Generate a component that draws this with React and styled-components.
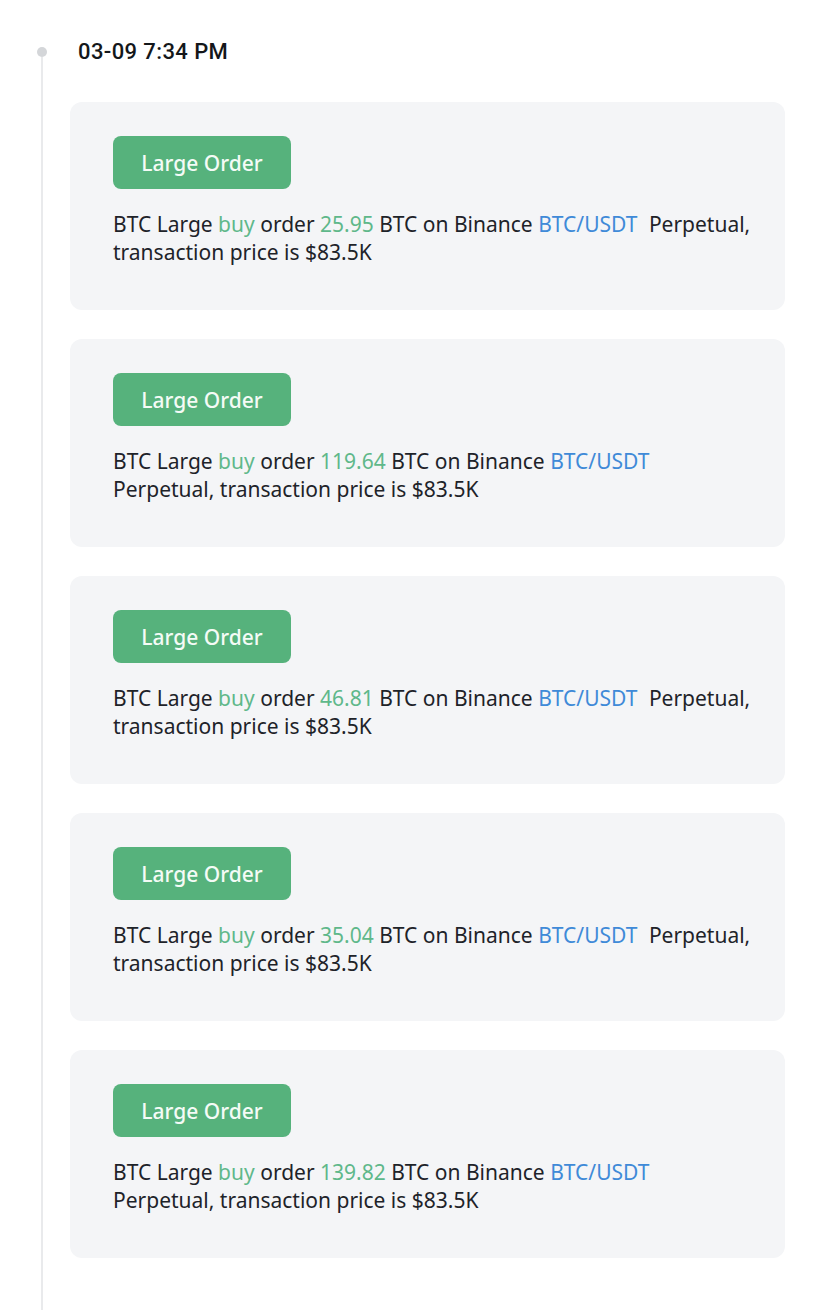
import React from "react";
import styled, { createGlobalStyle } from "styled-components";

const Global = createGlobalStyle`
  html, body { margin: 0; padding: 0; background: #ffffff; }
  body { font-family: "Noto Sans", "Open Sans", sans-serif; color: #1e2329; }
`;

const Page = styled.div`
  display: flex;
  min-height: 1310px;
  box-sizing: border-box;
  padding: 38px 0 0 37px;
`;

const Rail = styled.div`
  width: 10px;
  display: flex;
  flex-direction: column;
  align-items: center;
  padding-top: 9px;
`;

const Dot = styled.div`
  width: 10px;
  height: 10px;
  border-radius: 50%;
  background: #d4d6d9;
  flex: none;
`;

const Line = styled.div`
  width: 2px;
  flex: 1;
  background: #e9eaec;
`;

const Content = styled.div`
  margin-left: 23px;
  width: 715px;
  display: flex;
  flex-direction: column;
  padding-bottom: 51px;
`;

const Time = styled.div`
  height: 28px;
  line-height: 28px;
  margin-left: 8px;
  font-family: Roboto, "Liberation Sans", sans-serif;
  font-weight: 500;
  font-size: 22px;
  color: #14171a;
  letter-spacing: 0.4px;
`;

const List = styled.div`
  margin-top: 36px;
  display: flex;
  flex-direction: column;
  gap: 29px;
`;

const Card = styled.div`
  box-sizing: border-box;
  height: 208px;
  padding: 34px 30px 0 43px;
  background: #f4f5f7;
  border-radius: 12px;
  display: flex;
  flex-direction: column;
  align-items: flex-start;
  gap: 21px;
`;

const Badge = styled.div`
  height: 53px;
  width: 178px;
  box-sizing: border-box;
  display: inline-flex;
  align-items: center;
  justify-content: center;
  background: #56b27c;
  border-radius: 8px;
  color: #f4fbf6;
  font-size: 21px;
  font-weight: 500;
`;

const Text = styled.p`
  margin: 0;
  font-size: 21px;
  line-height: 28px;
  color: #1e2329;
`;

const Hl = styled.span`
  color: ${(p) => (p.$tone === "blue" ? "#3f8ad8" : "#5fb88a")};
  margin-right: ${(p) => (p.$tone === "blue" ? "6px" : "0")};
`;

const orders = ["25.95", "119.64", "46.81", "35.04", "139.82"];

export default function App() {
  return (
    <>
      <Global />
      <Page>
        <Rail>
          <Dot />
          <Line />
        </Rail>
        <Content>
          <Time>03-09 7:34 PM</Time>
          <List>
            {orders.map((amt) => (
              <Card key={amt}>
                <Badge>Large Order</Badge>
                <Text>
                  BTC Large <Hl>buy</Hl> order <Hl>{amt}</Hl> BTC on Binance{" "}
                  <Hl $tone="blue">BTC/USDT</Hl> Perpetual, transaction price is $83.5K
                </Text>
              </Card>
            ))}
          </List>
        </Content>
      </Page>
    </>
  );
}
